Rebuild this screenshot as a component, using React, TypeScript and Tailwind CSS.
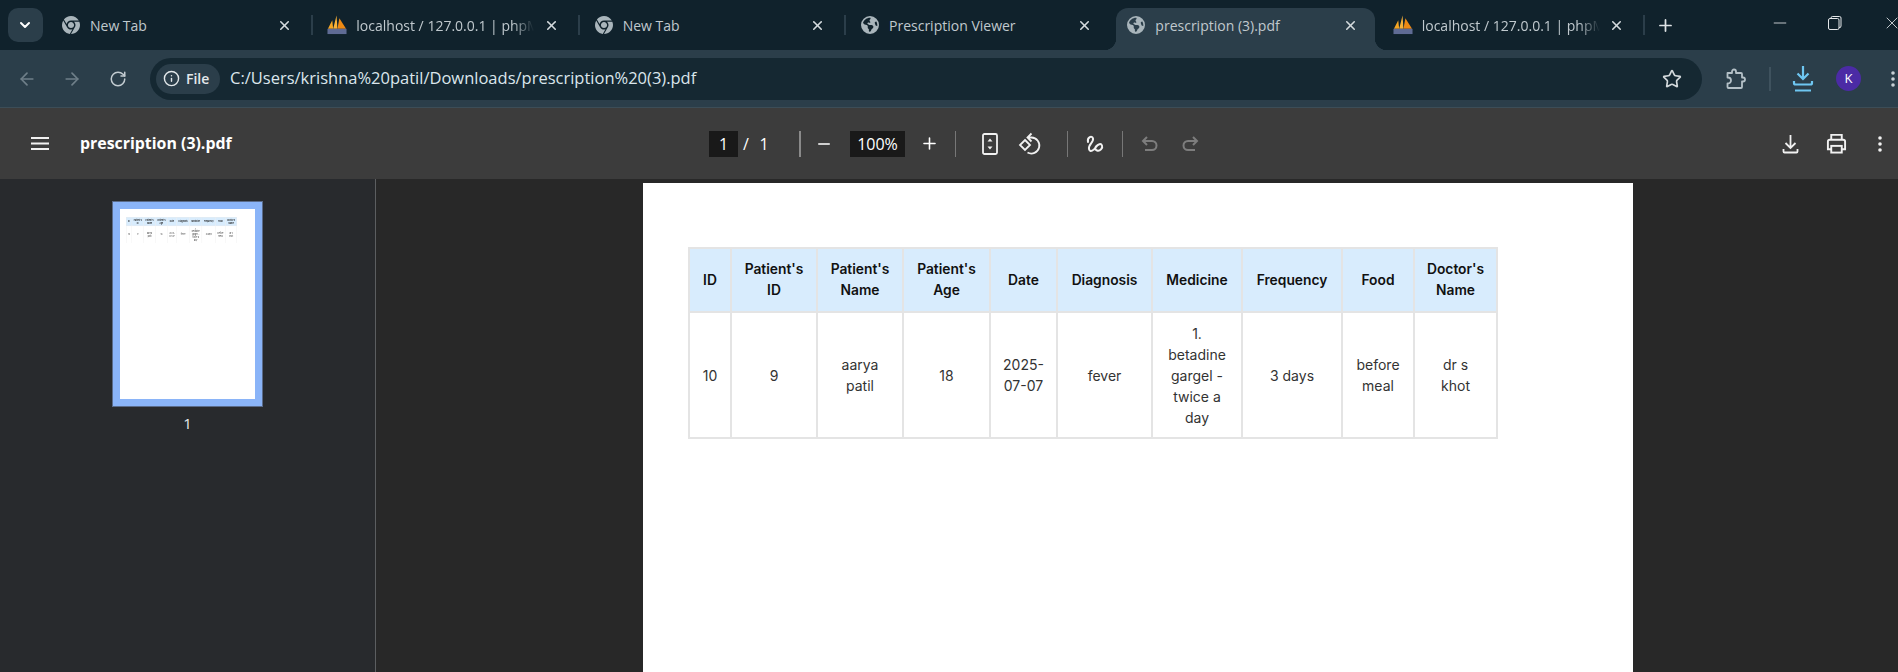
import { ArrowLeft, ArrowRight, ChevronDown, Info, Minus, Plus, RotateCw, Star, X } from 'lucide-react';
import { FaChrome, FaEarthAmericas } from 'react-icons/fa6';
import type { ReactNode } from 'react';

const headers = [
    ['ID'],
    ["Patient's", 'ID'],
    ["Patient's", 'Name'],
    ["Patient's", 'Age'],
    ['Date'],
    ['Diagnosis'],
    ['Medicine'],
    ['Frequency'],
    ['Food'],
    ["Doctor's", 'Name'],
];

const row = [
    ['10'],
    ['9'],
    ['aarya', 'patil'],
    ['18'],
    ['2025-', '07-07'],
    ['fever'],
    ['1.', 'betadine', 'gargel -', 'twice a', 'day'],
    ['3 days'],
    ['before', 'meal'],
    ['dr s', 'khot'],
];

function Lines({ lines }: { lines: string[] }) {
    return (
        <>
            {lines.map((line) => (
                <div key={line}>{line}</div>
            ))}
        </>
    );
}

function PrescriptionTable() {
    return (
        <table className="w-[808px] table-fixed border-collapse font-['Inter',sans-serif] text-[14px] leading-[21px] text-[#333]">
            <colgroup>
                <col className="w-[42px]" />
                <col className="w-[86px]" />
                <col className="w-[86px]" />
                <col className="w-[87px]" />
                <col className="w-[67px]" />
                <col className="w-[95px]" />
                <col className="w-[90px]" />
                <col className="w-[100px]" />
                <col className="w-[72px]" />
                <col className="w-[83px]" />
            </colgroup>
            <thead>
                <tr className="h-[64px] bg-[#d8ecfd]">
                    {headers.map((lines, i) => (
                        <th key={i} className="border-2 border-[#e4e4e4] p-0 text-center text-[13.8px] font-semibold text-[#111]">
                            <Lines lines={lines} />
                        </th>
                    ))}
                </tr>
            </thead>
            <tbody>
                <tr className="h-[126px] bg-white">
                    {row.map((lines, i) => (
                        <td key={i} className="border-2 border-[#e4e4e4] p-0 text-center">
                            <Lines lines={lines} />
                        </td>
                    ))}
                </tr>
            </tbody>
        </table>
    );
}

function PmaIcon() {
    return (
        <svg width="21" height="20" viewBox="0 0 21 20">
            <polygon points="1,14 5.500,5 6.500,14" fill="#f5a623" />
            <polygon points="6.500,14 10,0 11,14" fill="#f7b23a" />
            <polygon points="11,14 13,3 20,14" fill="#ee8a14" />
            <rect x="0.500" y="14" width="20" height="5.500" fill="#5f6b94" />
        </svg>
    );
}

function Tab({ title, icon, active, sep, fade }: { title: string; icon: ReactNode; active?: boolean; sep?: boolean; fade?: boolean }) {
    return (
        <div
            className={
                active
                    ? "relative mx-[4px] flex h-[42px] w-[258.5px] items-center rounded-t-[12px] bg-[#2b3e4a] pb-[8px] pl-[10px] before:absolute before:bottom-0 before:left-[-12px] before:h-[12px] before:w-[12px] before:bg-[radial-gradient(circle_at_0_0,transparent_12px,#2b3e4a_12.5px)] before:content-[''] after:absolute after:bottom-0 after:right-[-12px] after:h-[12px] after:w-[12px] after:bg-[radial-gradient(circle_at_100%_0,transparent_12px,#2b3e4a_12.5px)] after:content-['']"
                    : 'relative flex h-[42px] w-[266.5px] items-center pb-[8px] pl-[14px]'
            }
        >
            <div className="flex w-[20px] items-center justify-center text-[#a9b5bb]">{icon}</div>
            <div
                className={
                    fade
                        ? 'ml-[9px] w-[178px] overflow-hidden whitespace-nowrap text-[14px] text-[#c0c9ce] [mask-image:linear-gradient(to_right,black_88%,transparent)]'
                        : 'ml-[9px] w-[178px] whitespace-nowrap text-[14px] text-[#c0c9ce]'
                }
            >
                {title}
            </div>
            <div className="ml-[9px] flex w-[16px] items-center justify-center text-[#d5dbde]">
                <X size={15} strokeWidth={2.5} />
            </div>
            {sep && <div className="absolute right-0 top-[7px] h-[20px] w-[2px] bg-[#2b3e4a]" />}
        </div>
    );
}

function IconBox({ children, className }: { children: ReactNode; className: string }) {
    return <div className={`flex h-[24px] w-[24px] shrink-0 items-center justify-center ${className}`}>{children}</div>;
}

function DotsIcon({ color }: { color: string }) {
    return (
        <svg width="24" height="24" viewBox="0 0 24 24" fill={color}>
            <circle cx="12" cy="6" r="1.800" />
            <circle cx="12" cy="12" r="1.800" />
            <circle cx="12" cy="18" r="1.800" />
        </svg>
    );
}

export default function App() {
    return (
        <div className="flex h-[672px] w-[1898px] flex-col overflow-hidden bg-[#282828] font-['Open_Sans',sans-serif]">
            {/* Tab strip */}
            <div className="flex h-[50px] shrink-0 bg-[#10222c] pt-[8px]">
                <div className="ml-[8px] mr-[4px] flex h-[34px] w-[35px] items-center justify-center rounded-[10px] bg-[#2b3e4a] text-white">
                    <ChevronDown size={16} strokeWidth={3} />
                </div>
                <Tab title="New Tab" icon={<FaChrome size={18} />} sep />
                <Tab title="localhost / 127.0.0.1 | phpMyAdmin" icon={<PmaIcon />} sep fade />
                <Tab title="New Tab" icon={<FaChrome size={18} />} sep />
                <Tab title="Prescription Viewer" icon={<FaEarthAmericas size={18} />} />
                <Tab title="prescription (3).pdf" icon={<FaEarthAmericas size={18} />} active />
                <Tab title="localhost / 127.0.0.1 | phpMyAdmin" icon={<PmaIcon />} sep fade />
                <div className="ml-[8px] flex h-[34px] w-[24px] items-center justify-center text-[#dfe4e6]">
                    <Plus size={19} strokeWidth={2.2} />
                </div>
                <div className="ml-[92px] flex h-[30px] w-[22px] items-center justify-center text-[#e4e8ea]">
                    <Minus size={20} strokeWidth={1} />
                </div>
                <div className="ml-[33px] flex h-[30px] w-[22px] items-center justify-center">
                    <svg width="14" height="14" viewBox="0 0 14 14" fill="none" stroke="#e4e8ea" strokeWidth="1">
                        <rect x="0.500" y="2.500" width="10.500" height="11" rx="1.500" />
                        <path d="M3 2.500V2a1.500 1.500 0 0 1 1.500-1.500h7A1.500 1.500 0 0 1 13 2v8a1.500 1.500 0 0 1-2 1.400" />
                    </svg>
                </div>
                <div className="ml-[36px] flex h-[30px] w-[16px] items-center text-[#e4e8ea]">
                    <X size={20} strokeWidth={1} className="shrink-0" />
                </div>
            </div>

            {/* Browser toolbar */}
            <div className="flex h-[58px] shrink-0 items-center border-b border-[#3c4d57] bg-[#2b3e4a]">
                <div className="ml-[15px] flex w-[135px] items-center">
                    <IconBox className="text-[#6f7f89]">
                        <ArrowLeft size={20} />
                    </IconBox>
                    <IconBox className="ml-[21px] text-[#6f7f89]">
                        <ArrowRight size={20} />
                    </IconBox>
                    <IconBox className="ml-[22px] text-[#c3ccd1]">
                        <RotateCw size={18} />
                    </IconBox>
                </div>
                <div className="flex h-[42px] w-[1552px] items-center rounded-full bg-[#152832] pl-[6px] pr-[18px]">
                    <div className="flex h-[30px] w-[64px] items-center rounded-full bg-[#2b3e4a] pl-[7px] text-[#e3e8ea]">
                        <Info size={17} />
                        <span className="ml-[6px] text-[14px] font-semibold">File</span>
                    </div>
                    <div className="ml-[10px] text-[16.5px] text-[#dbe6ec]">C:/Users/krishna%20patil/Downloads/prescription%20(3).pdf</div>
                    <IconBox className="ml-auto text-[#d3d9dc]">
                        <Star size={20} strokeWidth={2} />
                    </IconBox>
                </div>
                <IconBox className="ml-[22px]">
                    <svg width="22" height="22" viewBox="0 0 22 22" fill="none" stroke="#b4c0c7" strokeWidth="1.800" strokeLinejoin="round">
                        <path d="M2.500 5H7V3.500a2 2 0 0 1 4 0V5h5a1 1 0 0 1 1 1v3.500h1a2 2 0 0 1 0 4h-1V19a1 1 0 0 1-1 1H3.500a1 1 0 0 1-1-1v-3.500h.5a3 3 0 0 0 0-6h-.5z" />
                    </svg>
                </IconBox>
                <div className="ml-[21px] h-[24px] w-[2px] bg-[#3f525e]" />
                <IconBox className="ml-[20px]">
                    <svg width="24" height="30" viewBox="0 0 24 30" fill="none" stroke="#6ec6f1" strokeWidth="2.200">
                        <path d="M12 2v13M6.500 9.500l5.500 5.500 5.500-5.500M3 17v2a1.500 1.500 0 0 0 1.500 1.500h15A1.500 1.500 0 0 0 21 19v-2M4 26.500h16" />
                    </svg>
                </IconBox>
                <div className="ml-[21px] flex h-[25px] w-[25px] shrink-0 items-center justify-center rounded-full bg-[#4b2ba5] text-[13px] text-white">K</div>
                <IconBox className="ml-[20px] -mr-[8px]">
                    <DotsIcon color="#c7d0d5" />
                </IconBox>
            </div>

            {/* PDF toolbar */}
            <div className="flex h-[71px] shrink-0 items-center bg-[#3c3c3c] pr-[6px] text-white">
                <div className="flex w-[709px] shrink-0 items-center pl-[28px]">
                    <IconBox className="">
                        <svg width="18" height="13" viewBox="0 0 18 13" fill="#f1f1f1">
                            <rect y="0" width="18" height="2" />
                            <rect y="5.500" width="18" height="2" />
                            <rect y="11" width="18" height="2" />
                        </svg>
                    </IconBox>
                    <div className="ml-[28px] text-[15.900px] font-bold">prescription (3).pdf</div>
                </div>
                <div className="flex h-[26px] w-[29px] shrink-0 items-center justify-center bg-[#191919] text-[16px]">1</div>
                <div className="w-[16px] text-center text-[16px]">/</div>
                <div className="w-[20px] text-center text-[16px]">1</div>
                <div className="ml-[25px] h-[26px] w-[2px] bg-[#8a8a8a]" />
                <IconBox className="ml-[11px]">
                    <Minus size={18} strokeWidth={2} />
                </IconBox>
                <div className="ml-[14px] flex h-[26px] w-[55px] shrink-0 items-center justify-center bg-[#191919] text-[16px]">100%</div>
                <IconBox className="ml-[12px]">
                    <Plus size={19} strokeWidth={2} />
                </IconBox>
                <div className="ml-[14px] h-[26px] w-px bg-[#777]" />
                <IconBox className="ml-[22px]">
                    <svg width="16" height="22" viewBox="0 0 16 22" fill="none" stroke="#f1f1f1" strokeWidth="1.800">
                        <rect x="1" y="1" width="14" height="20" rx="1.500" />
                        <path d="M8 5.500l-2.500 3h5zM8 16.500l-2.500-3h5z" fill="#f1f1f1" stroke="none" />
                    </svg>
                </IconBox>
                <IconBox className="ml-[16px]">
                    <svg width="24" height="24" viewBox="0 0 24 24" fill="none" stroke="#f1f1f1" strokeWidth="1.800">
                        <path d="M7 8 12 13l-5 5-5-5z" />
                        <path d="M10 5.500h3.500a8 8 0 1 1-4 15M13.500 1.500 9.500 5.500l4 4" />
                    </svg>
                </IconBox>
                <div className="ml-[25px] h-[26px] w-px bg-[#777]" />
                <IconBox className="ml-[15px]">
                    <svg width="22" height="22" viewBox="0 0 22 22" fill="none" stroke="#f1f1f1" strokeWidth="2" strokeLinecap="round">
                        <path d="M4 9C3 4 8 2 9 5.500S4 12 5 16s5 1 7-2 5-4 6-1.500-2 6-5 5-1.500-4 0-5" />
                    </svg>
                </IconBox>
                <div className="ml-[15px] h-[26px] w-px bg-[#777]" />
                <IconBox className="ml-[15px]">
                    <svg width="20" height="20" viewBox="0 0 20 20" fill="none" stroke="#7d7d7d" strokeWidth="2">
                        <path d="M7 3 3 7l4 4M3 7h9a4.500 4.500 0 0 1 0 9H5" />
                    </svg>
                </IconBox>
                <IconBox className="ml-[16px]">
                    <svg width="20" height="20" viewBox="0 0 20 20" fill="none" stroke="#7d7d7d" strokeWidth="2">
                        <path d="m13 3 4 4-4 4M17 7H8a4.500 4.500 0 0 0 0 9h7" />
                    </svg>
                </IconBox>
                <IconBox className="ml-auto">
                    <svg width="17" height="20" viewBox="0 0 17 20" fill="none" stroke="#f1f1f1" strokeWidth="1.800">
                        <path d="M8.500 1v13M3.500 9l5 5 5-5M1.500 15v2.500a1 1 0 0 0 1 1h12a1 1 0 0 0 1-1V15" />
                    </svg>
                </IconBox>
                <IconBox className="ml-[22px]">
                    <svg width="21" height="21" viewBox="0 0 22 22" fill="none" stroke="#f1f1f1" strokeWidth="2">
                        <path d="M5.500 7V2h11v5M5.500 17H2V9a2 2 0 0 1 2-2h14a2 2 0 0 1 2 2v8h-3.500" />
                        <rect x="5.500" y="13.500" width="11" height="7" />
                    </svg>
                </IconBox>
                <IconBox className="ml-[20px]">
                    <DotsIcon color="#f1f1f1" />
                </IconBox>
            </div>

            <div className="flex min-h-0 flex-1">
                {/* Thumbnails */}
                <aside className="flex w-[376px] shrink-0 flex-col items-start border-r border-[#5c5e60] bg-[#282a2d] pl-[112px] pt-[22px]">
                    <div className="h-[206px] w-[151px] border-[8px] border-[#8ab4f8] bg-white outline outline-1 -outline-offset-1 outline-[#5a6b8a]">
                        <div className="ml-[6px] mt-[8px] h-[26px] w-[111px] overflow-hidden">
                            <div className="w-[808px] origin-top-left scale-[0.137]">
                                <PrescriptionTable />
                            </div>
                        </div>
                    </div>
                    <div className="mt-[6px] w-[151px] text-center text-[15px] leading-[20px] text-[#e8eaed]">1</div>
                </aside>

                {/* Page */}
                <main className="flex-1 pl-[267px] pt-[4px]">
                    <div className="h-[600px] w-[990px] bg-white pl-[45px] pt-[64px]">
                        <PrescriptionTable />
                    </div>
                </main>
            </div>
        </div>
    );
}
